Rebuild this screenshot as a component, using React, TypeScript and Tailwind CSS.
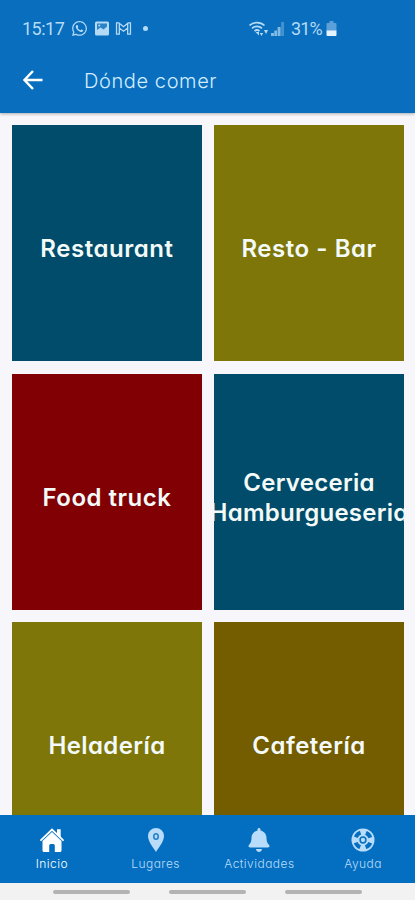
import { FaBell, FaWhatsapp } from 'react-icons/fa'

const categories = [
  { lines: ['Restaurant'], color: 'bg-[#004c6a]', tracking: 'tracking-[0.55px]' },
  { lines: ['Resto - Bar'], color: 'bg-[#7e7608]', tracking: 'tracking-[0.55px]' },
  { lines: ['Food truck'], color: 'bg-[#800003]', tracking: 'tracking-[0.5px]' },
  { lines: ['Cerveceria', 'Hamburgueseria'], color: 'bg-[#004c6a]', tracking: 'tracking-[0.25px]' },
  { lines: ['Heladería'], color: 'bg-[#7e7608]', tracking: 'tracking-[0.4px]' },
  { lines: ['Cafetería'], color: 'bg-[#745c00]', tracking: 'tracking-[0.5px]' },
]

type IconProps = { className?: string }

function HomeIcon({ className }: IconProps) {
  return (
    <svg className={className} viewBox="0 0 24 24">
      <path d="M1 12.200L12 1.500l11 10.700" fill="none" stroke="currentColor" strokeWidth="1.800" strokeLinecap="round" />
      <path d="M17 1.300h3.700v8.400L17 6z" fill="currentColor" />
      <path d="M12 4L21.500 13v9.500a1.500 1.500 0 0 1-1.500 1.500h-5.200v-6.500a1.500 1.500 0 0 0-1.500-1.500h-2.600a1.500 1.500 0 0 0-1.500 1.500V24H4a1.500 1.500 0 0 1-1.500-1.500V13z" fill="currentColor" />
    </svg>
  )
}

function PinIcon({ className }: IconProps) {
  return (
    <svg className={className} viewBox="0 0 24 24">
      <path d="M12 0a8 8 0 0 1 8 8c0 5.500-5 11-8 16C9 19 4 13.500 4 8a8 8 0 0 1 8-8z" fill="currentColor" />
      <ellipse cx="12" cy="8.500" rx="2.200" ry="2.700" fill="none" stroke="#2480c8" strokeWidth="1.600" />
    </svg>
  )
}

function BuoyIcon({ className }: IconProps) {
  return (
    <svg className={className} viewBox="0 0 24 24">
      <circle cx="12" cy="12" r="11.500" fill="currentColor" />
      <g fill="none" stroke="#046fc0">
        <circle cx="12" cy="12" r="7.700" strokeWidth="4" strokeDasharray="6.600 5.495" strokeDashoffset="-2.750" />
        <circle cx="12" cy="12" r="2.900" strokeWidth="1.500" />
      </g>
    </svg>
  )
}

const tabs = [
  { label: 'Inicio', icon: HomeIcon, active: true },
  { label: 'Lugares', icon: PinIcon, active: false },
  { label: 'Actividades', icon: FaBell, active: false },
  { label: 'Ayuda', icon: BuoyIcon, active: false },
]

function StatusBar() {
  return (
    <div className="flex h-[50px] items-center pt-[7px] pl-[22px] text-[#b5daf5]">
      <span className="w-[49px] font-[Roboto,sans-serif] text-[18px] tracking-[-0.5px]">15:17</span>
      <FaWhatsapp className="size-[17px]" />
      {/* picture */}
      <svg className="ml-[6px] h-[15px] w-[16px]" viewBox="0 0 16 15">
        <path d="M2.500 .5h11A1.500 1.500 0 0 1 15 2v11a1.500 1.500 0 0 1-1.500 1.500h-11A1.500 1.500 0 0 1 1 13V2A1.500 1.500 0 0 1 2.500.5z" fill="currentColor" />
        <path d="M3 2.500h10v3L9.500 8.500 6.500 6.500 3 9z" fill="#2a82c8" />
        <circle cx="5.300" cy="4.500" r="1" fill="currentColor" />
      </svg>
      {/* mail */}
      <svg className="ml-[5px] h-[13px] w-[17px]" viewBox="0 0 17 14" fill="none" stroke="currentColor" strokeWidth="1.400">
        <path d="M1 1h2.500l5 4 5-4H16v12h-3V6.500L8.500 10 4 6.500V13H1zM4 1.500v5M13 1.500v5" />
      </svg>
      <span className="ml-[11px] size-[5px] rounded-full bg-[#b5daf5]" />
      {/* wifi */}
      <svg className="ml-[101px] h-[17px] w-[20px]" viewBox="0 0 20 17" fill="none" stroke="currentColor" strokeWidth="1.700">
        <path d="M.5 5.500a11 11 0 0 1 15 0M3 8.300a7.500 7.500 0 0 1 10 0M5.500 11a4 4 0 0 1 5 0" />
        <path d="M6.500 12h3.500v3.500zM10.800 13h3.400l-1.700 3zM15 10h4l-2 4z" fill="currentColor" stroke="none" />
      </svg>
      <svg className="ml-[2px] h-[14px] w-[14px]" viewBox="0 0 14 14" fill="currentColor">
        <path d="M0 11h3v3H0zM3.300 8.500H6V14H3.300zM6.600 5h3v9h-3z" opacity=".7" />
        <path d="M10.200 0H13v14h-2.800z" opacity=".35" />
      </svg>
      <span className="ml-[6px] w-[33px] font-[Roboto,sans-serif] text-[18px] tracking-[-0.9px]">31%</span>
      <svg className="ml-[2px] h-[15px] w-[11px]" viewBox="0 0 11 15">
        <path d="M3.500 0h4v2H9.500a1 1 0 0 1 1 1v7H.5V3a1 1 0 0 1 1-1h2z" fill="#5ba0d8" />
        <path d="M.5 9.500h10V14a1 1 0 0 1-1 1h-8a1 1 0 0 1-1-1z" fill="#e3f3ff" />
      </svg>
    </div>
  )
}

export default function App() {
  return (
    <div className="flex h-[900px] w-[415px] flex-col overflow-hidden bg-[#f6f6fb] font-[Inter,sans-serif]">
      <header className="z-10 h-[113px] shrink-0 bg-[#086ebd] shadow-[0_1px_3px_rgba(0,0,0,0.3)]">
        <StatusBar />
        <div className="flex h-[60px] items-center pl-[22px]">
          <svg className="size-[22px]" viewBox="0 0 22 22" fill="none" stroke="white" strokeWidth="2.500">
            <path d="M20.500 11H3M11 2L2.500 11 11 20" />
          </svg>
          <h1 className="ml-[40px] pt-px text-[20px] font-light tracking-[0.6px] text-[#d3edff] [font-feature-settings:'cv11']">Dónde comer</h1>
        </div>
      </header>

      <main className="grid min-h-0 flex-1 auto-rows-[236px] grid-cols-2 gap-x-3 gap-y-[12.5px] overflow-hidden pt-3 pr-[11px] pl-3">
        {categories.map((category) => (
          <div
            key={category.lines[0]}
            className={`flex flex-col items-center justify-center overflow-hidden pt-3 text-[24px] leading-[30px] font-semibold text-[#f3faf8] [font-feature-settings:'cv11'] ${category.color} ${category.tracking}`}
          >
            {category.lines.map((line) => (
              <span key={line} className="whitespace-nowrap">{line}</span>
            ))}
          </div>
        ))}
      </main>

      <nav className="grid h-[68px] shrink-0 grid-cols-4 bg-[#046fc0]">
        {tabs.map(({ label, icon: Icon, active }) => (
          <div key={label} className={`flex flex-col items-center pt-[13px] ${active ? 'text-white' : 'text-[#b9dcfa]'}`}>
            <Icon className="size-6" />
            <span className="mt-[3px] text-[12px] leading-[18px] font-light tracking-[0.45px] [font-feature-settings:'cv11']">{label}</span>
          </div>
        ))}
      </nav>

      <div className="flex h-[17px] shrink-0 items-center justify-center gap-[39px] bg-[#f2f2f2]">
        <span className="h-[4px] w-[77px] rounded-full bg-[#b3b3b3]" />
        <span className="h-[4px] w-[77px] rounded-full bg-[#b3b3b3]" />
        <span className="h-[4px] w-[77px] rounded-full bg-[#b3b3b3]" />
      </div>
    </div>
  )
}
